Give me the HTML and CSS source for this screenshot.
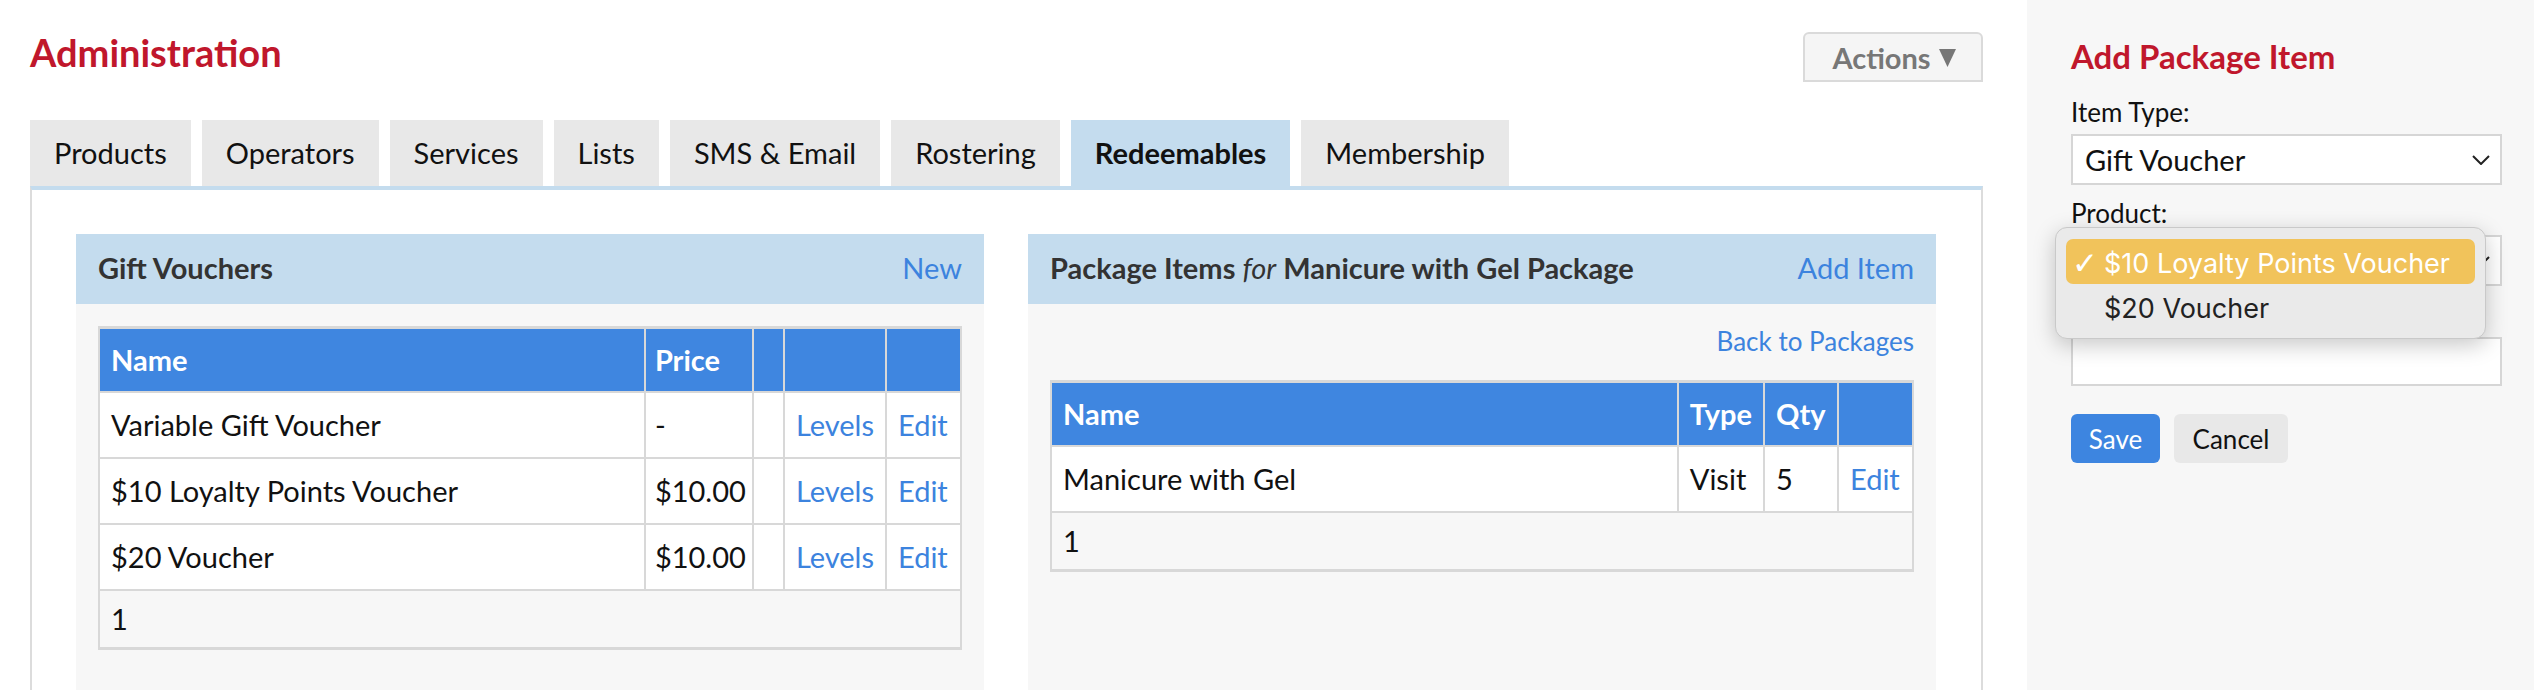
FILE: index.html
```html
<!DOCTYPE html>
<html lang="en">
<head>
<meta charset="utf-8">
<title>Administration</title>
<link rel="stylesheet" href="styles.css">
</head>
<body>
<div class="page">
  <main class="main">
    <div class="top-bar">
      <h1 class="page-title">Administration</h1>
      <button class="actions-btn">Actions <svg class="caret" width="17" height="18" viewBox="0 0 17 18"><path d="M0 0 H17 L8.5 18 Z" fill="#777"/></svg></button>
    </div>
    <nav class="tabs">
      <a class="tab">Products</a>
      <a class="tab">Operators</a>
      <a class="tab">Services</a>
      <a class="tab">Lists</a>
      <a class="tab">SMS &amp; Email</a>
      <a class="tab">Rostering</a>
      <a class="tab active">Redeemables</a>
      <a class="tab">Membership</a>
    </nav>
    <div class="tab-content">
      <section class="panel">
        <header class="panel-head">
          <span class="panel-title">Gift Vouchers</span>
          <a class="link">New</a>
        </header>
        <div class="panel-body">
          <table class="grid gift-grid">
            <colgroup>
              <col class="c-name"><col class="c-price"><col class="c-blank"><col class="c-levels"><col class="c-edit">
            </colgroup>
            <thead>
              <tr><th>Name</th><th class="price">Price</th><th></th><th></th><th></th></tr>
            </thead>
            <tbody>
              <tr><td>Variable Gift Voucher</td><td class="price">-</td><td></td><td><a class="link">Levels</a></td><td><a class="link">Edit</a></td></tr>
              <tr><td>$10 Loyalty Points Voucher</td><td class="price">$10.00</td><td></td><td><a class="link">Levels</a></td><td><a class="link">Edit</a></td></tr>
              <tr><td>$20 Voucher</td><td class="price">$10.00</td><td></td><td><a class="link">Levels</a></td><td><a class="link">Edit</a></td></tr>
            </tbody>
            <tfoot>
              <tr><td colspan="5">1</td></tr>
            </tfoot>
          </table>
        </div>
      </section>
      <section class="panel">
        <header class="panel-head">
          <span class="panel-title">Package Items <em class="for">for</em> Manicure with Gel Package</span>
          <a class="link">Add Item</a>
        </header>
        <div class="panel-body">
          <div class="back-row"><a class="link">Back to Packages</a></div>
          <table class="grid pkg-grid">
            <colgroup>
              <col class="p-name"><col class="p-type"><col class="p-qty"><col class="p-edit">
            </colgroup>
            <thead>
              <tr><th>Name</th><th>Type</th><th>Qty</th><th></th></tr>
            </thead>
            <tbody>
              <tr><td>Manicure with Gel</td><td>Visit</td><td>5</td><td><a class="link">Edit</a></td></tr>
            </tbody>
            <tfoot>
              <tr><td colspan="4">1</td></tr>
            </tfoot>
          </table>
        </div>
      </section>
    </div>
  </main>
  <aside class="sidebar">
    <h2 class="side-title">Add Package Item</h2>
    <label class="field-label">Item Type:</label>
    <div class="select">
      <span>Gift Voucher</span>
      <svg class="chev" width="18" height="10" viewBox="0 0 18 10"><path d="M1 1 L9 9 L17 1" fill="none" stroke="#222" stroke-width="2"/></svg>
    </div>
    <label class="field-label gap">Product:</label>
    <div class="select">
      <span></span>
      <svg class="chev" width="18" height="10" viewBox="0 0 18 10"><path d="M1 1 L9 9 L17 1" fill="none" stroke="#222" stroke-width="2"/></svg>
    </div>
    <div class="input"></div>
    <div class="buttons">
      <button class="btn btn-save">Save</button>
      <button class="btn btn-cancel">Cancel</button>
    </div>
    <div class="popup">
      <div class="opt selected"><span class="check">✓</span>$10 Loyalty Points Voucher</div>
      <div class="opt">$20 Voucher</div>
    </div>
  </aside>
</div>
</body>
</html>
```
FILE: styles.css
```css
html, body {
  margin: 0;
  height: 690px;
  overflow: hidden;
}
body {
  font-family: Lato, "Liberation Sans", sans-serif;
  color: #111;
  background: #fff;
}
.page {
  display: flex;
  height: 690px;
}
.main {
  flex: 1;
  min-width: 0;
  padding-left: 30px;
  margin-right: 44px;
  display: flex;
  flex-direction: column;
}
.top-bar {
  display: flex;
  justify-content: space-between;
  align-items: flex-start;
  padding-top: 30px;
}
.page-title {
  margin: 0;
  font-size: 38px;
  line-height: 44px;
  font-weight: 700;
  color: #c0172c;
}
.actions-btn {
  margin-top: 2px;
  width: 180px;
  height: 50px;
  box-sizing: border-box;
  border: 2px solid #dadada;
  border-radius: 6px 6px 0 0;
  background: #f5f5f5;
  color: #777;
  font-family: Lato, sans-serif;
  font-weight: 700;
  font-size: 29px;
  padding: 0 0 0 2px;
  display: flex;
  align-items: center;
  justify-content: center;
  gap: 8px;
}
.caret {
  display: block;
  margin-top: 2px;
}
.tabs {
  display: flex;
  gap: 11px;
  margin-top: 38px;
}
.tab {
  height: 66px;
  line-height: 66px;
  padding: 0 24px;
  background: #e8e8e8;
  font-size: 29px;
  color: #111;
}
.tab.active {
  background: #c4dcee;
  font-weight: 700;
}
.tab-content {
  flex: 1;
  display: flex;
  gap: 44px;
  padding: 44px 45px 0 44px;
  border: 2px solid #dcdcdc;
  border-top: 4px solid #c4dcee;
  border-bottom: none;
}
.panel {
  flex: 1;
  min-width: 0;
  display: flex;
  flex-direction: column;
}
.panel-head {
  height: 70px;
  box-sizing: border-box;
  flex: none;
  display: flex;
  justify-content: space-between;
  align-items: center;
  padding: 0 22px 3px;
  background: #c4dcee;
  font-size: 29px;
}
.panel-title {
  font-weight: 700;
  color: #333;
}
.for {
  font-weight: 400;
  font-style: italic;
}
.link {
  color: #3c83de;
  text-decoration: none;
}
.panel-body {
  flex: 1;
  background: #f7f7f7;
  padding: 22px;
}
.back-row {
  text-align: right;
  font-size: 26px;
  line-height: 31px;
  margin-bottom: 23px;
}
.grid {
  width: 100%;
  border-collapse: collapse;
  font-size: 29px;
  line-height: 36px;
  border-top: 3px solid #d8d8d8;
  border-bottom: 3px solid #d8d8d8;
}
.grid th,
.grid td {
  border: 2px solid #d8d8d8;
  padding: 14px 11px;
  text-align: left;
  white-space: nowrap;
}
.grid th {
  padding: 13px 11px;
  background: #3f86e0;
  color: #fff;
  font-weight: 700;
}
.grid tbody td {
  background: #fff;
}
.grid tfoot td {
  background: #f7f7f7;
  padding: 10px 11px;
}
.grid .price {
  padding-left: 9px;
  padding-right: 3px;
}
.c-price { width: 108px; }
.c-blank { width: 31px; }
.c-levels { width: 102px; }
.c-edit { width: 75px; }
.p-type { width: 85px; }
.p-qty { width: 74px; }
.p-edit { width: 75px; }
.sidebar {
  position: relative;
  width: 507px;
  flex: none;
  box-sizing: border-box;
  background: #f7f7f7;
  padding: 36px 32px 0 44px;
  display: flex;
  flex-direction: column;
  align-items: flex-start;
}
.side-title {
  margin: 0;
  font-size: 33px;
  line-height: 40px;
  font-weight: 700;
  color: #c0172c;
}
.field-label {
  display: block;
  margin-top: 21px;
  margin-bottom: 6px;
  font-size: 26px;
  line-height: 31px;
  color: #111;
}
.field-label.gap {
  margin-top: 13px;
}
.select,
.input {
  align-self: stretch;
  box-sizing: border-box;
  height: 51px;
  background: #fff;
  border: 2px solid #d6d6d6;
}
.select {
  display: flex;
  align-items: center;
  justify-content: space-between;
  padding: 0 10px 0 12px;
  font-size: 29px;
}
.chev {
  display: block;
}
.input {
  height: 49px;
  margin-top: 51px;
}
.buttons {
  display: flex;
  gap: 14px;
  margin-top: 28px;
}
.btn {
  height: 49px;
  border: none;
  border-radius: 6px;
  font-family: Lato, sans-serif;
  font-size: 26px;
  padding: 0 16px;
}
.btn-save {
  width: 89px;
  background: #3d85e0;
  color: #fff;
}
.btn-cancel {
  width: 114px;
  background: #e8e8e8;
  color: #111;
}
.popup {
  position: absolute;
  left: 28px;
  top: 227px;
  width: 431px;
  height: 112px;
  box-sizing: border-box;
  padding: 11px 10px 10px;
  background: #eaeaea;
  border: 1px solid #c9c9c9;
  border-radius: 12px;
  box-shadow: 0 6px 22px rgba(0, 0, 0, 0.22);
  font-family: Inter, "Noto Sans", sans-serif;
  font-size: 27px;
}
.opt {
  height: 41px;
  line-height: 41px;
  padding-top: 4px;
  padding-left: 38px;
  border-radius: 7px;
  color: #222;
  position: relative;
}
.opt.selected {
  background: #f1c35b;
  color: #fff;
}
.check {
  position: absolute;
  left: 6px;
  font-family: "DejaVu Sans", sans-serif;
  font-size: 31px;
}
```
